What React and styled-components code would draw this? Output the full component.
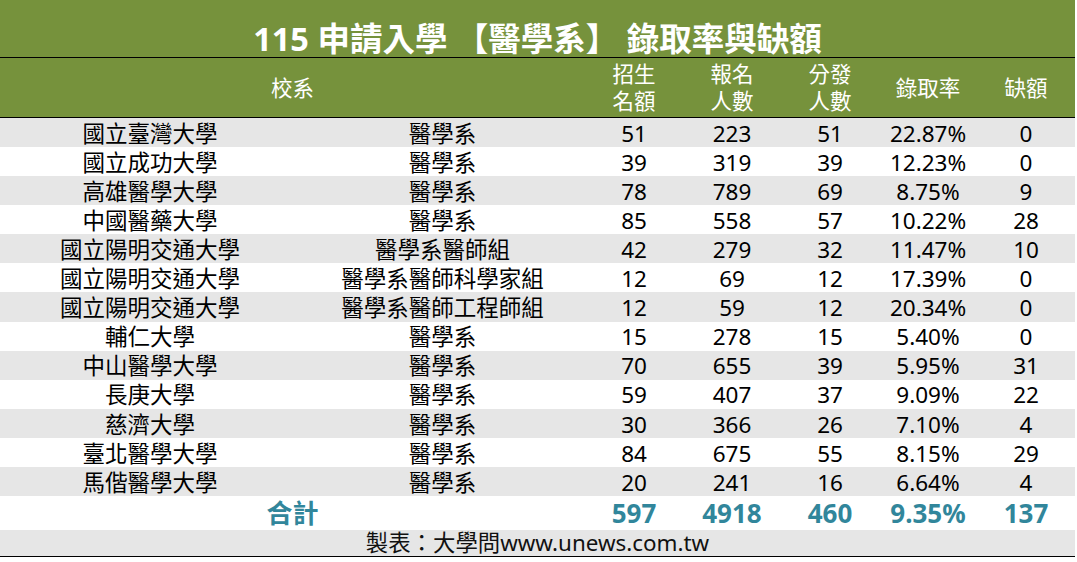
import React from "react";
import styled, { createGlobalStyle } from "styled-components";

const GlobalStyle = createGlobalStyle`
  html, body { margin: 0; padding: 0; background: #ffffff; }
  body { font-family: "Noto Sans", "Noto Sans CJK TC", sans-serif; }
`;

const COLS = "300px 285px repeat(5, 98px)";

const Sheet = styled.div`
  width: 1075px;
  display: flex;
  flex-direction: column;
  color: #000;
  font-family: "Noto Sans", "Noto Sans CJK TC", sans-serif;
`;

const TitleBar = styled.div`
  height: 58px;
  box-sizing: border-box;
  padding-top: 21px;
  background: #76923c;
  color: #fff;
  display: flex;
  align-items: center;
  justify-content: center;
  font-size: 32.5px;
  font-weight: 700;
  line-height: 1;
  white-space: pre;
  border-bottom: 1px solid #000;
`;

const HeadRow = styled.div`
  display: grid;
  grid-template-columns: ${COLS};
  height: 59px;
  background: #76923c;
  color: #fff;
  border-bottom: 1px solid #000;
`;

const HeadCell = styled.div`
  grid-column: ${(p) => (p.$span ? `span ${p.$span}` : "auto")};
  display: flex;
  align-items: center;
  justify-content: center;
  text-align: center;
  font-size: 21.5px;
  line-height: 27px;
  padding-bottom: 1px;
`;

const DataRow = styled.div`
  display: grid;
  grid-template-columns: ${COLS};
  height: 29.08px;
  background: ${(p) => (p.$shade ? "#e6e6e6" : "#ffffff")};
`;

const Cell = styled.div`
  display: flex;
  align-items: center;
  justify-content: center;
  padding-top: 3px;
  font-size: 22.5px;
  line-height: 1;
  white-space: nowrap;
`;

const TotalRow = styled.div`
  display: grid;
  grid-template-columns: ${COLS};
  height: 34px;
  background: #fff;
  color: #31869b;
`;

const TotalCell = styled.div`
  grid-column: ${(p) => (p.$span ? `span ${p.$span}` : "auto")};
  display: flex;
  align-items: center;
  justify-content: center;
  font-size: 26px;
  font-weight: 700;
  line-height: 1;
`;

const Footer = styled.div`
  height: 27px;
  background: #e6e6e6;
  display: flex;
  align-items: center;
  justify-content: center;
  padding-top: 1px;
  box-sizing: border-box;
  font-size: 22.4px;
  line-height: 1;
  color: #111;
  border-bottom: 1px solid #000;
`;

const rows = [
  ["國立臺灣大學", "醫學系", 51, 223, 51, "22.87%", 0],
  ["國立成功大學", "醫學系", 39, 319, 39, "12.23%", 0],
  ["高雄醫學大學", "醫學系", 78, 789, 69, "8.75%", 9],
  ["中國醫藥大學", "醫學系", 85, 558, 57, "10.22%", 28],
  ["國立陽明交通大學", "醫學系醫師組", 42, 279, 32, "11.47%", 10],
  ["國立陽明交通大學", "醫學系醫師科學家組", 12, 69, 12, "17.39%", 0],
  ["國立陽明交通大學", "醫學系醫師工程師組", 12, 59, 12, "20.34%", 0],
  ["輔仁大學", "醫學系", 15, 278, 15, "5.40%", 0],
  ["中山醫學大學", "醫學系", 70, 655, 39, "5.95%", 31],
  ["長庚大學", "醫學系", 59, 407, 37, "9.09%", 22],
  ["慈濟大學", "醫學系", 30, 366, 26, "7.10%", 4],
  ["臺北醫學大學", "醫學系", 84, 675, 55, "8.15%", 29],
  ["馬偕醫學大學", "醫學系", 20, 241, 16, "6.64%", 4],
];

export default function App() {
  return (
    <>
      <GlobalStyle />
      <Sheet>
        <TitleBar>115 申請入學 【醫學系】 錄取率與缺額</TitleBar>
        <HeadRow>
          <HeadCell $span={2}>校系</HeadCell>
          <HeadCell>招生<br />名額</HeadCell>
          <HeadCell>報名<br />人數</HeadCell>
          <HeadCell>分發<br />人數</HeadCell>
          <HeadCell>錄取率</HeadCell>
          <HeadCell>缺額</HeadCell>
        </HeadRow>
        {rows.map((r, i) => (
          <DataRow key={i} $shade={i % 2 === 0}>
            {r.map((v, j) => (
              <Cell key={j}>{v}</Cell>
            ))}
          </DataRow>
        ))}
        <TotalRow>
          <TotalCell $span={2}>合計</TotalCell>
          <TotalCell>597</TotalCell>
          <TotalCell>4918</TotalCell>
          <TotalCell>460</TotalCell>
          <TotalCell>9.35%</TotalCell>
          <TotalCell>137</TotalCell>
        </TotalRow>
        <Footer>製表：大學問www.unews.com.tw</Footer>
      </Sheet>
    </>
  );
}
